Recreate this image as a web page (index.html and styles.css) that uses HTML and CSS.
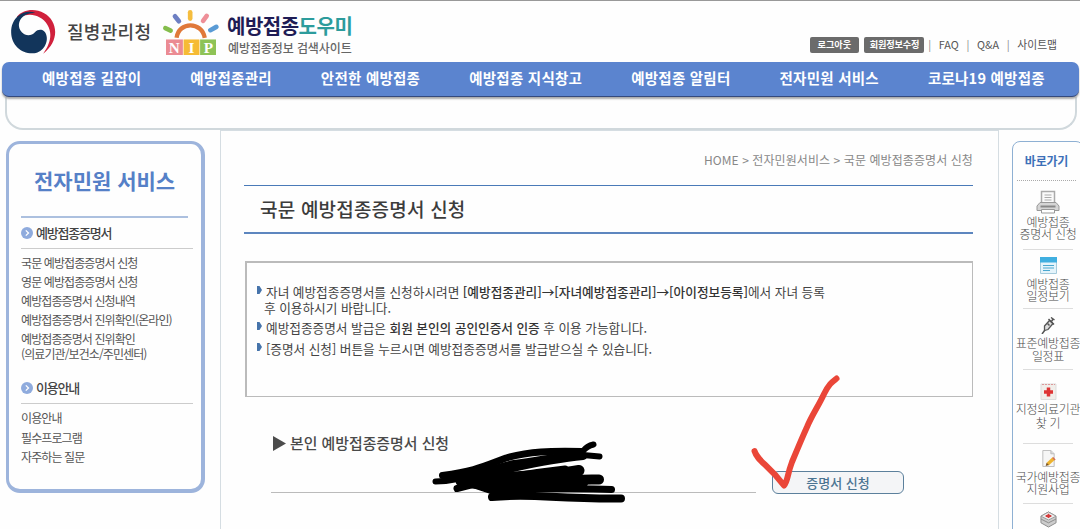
FILE: index.html
```html
<!DOCTYPE html>
<html lang="ko">
<head>
    <meta charset="UTF-8">
    <meta name="viewport" content="width=device-width, initial-scale=1.0">
    <title>예방접종도우미</title>
    <link rel="stylesheet" href="styles.css">
</head>
<body>
<div class="page">
    <header class="header">
        <div class="logos">
            <svg class="gov-mark" viewBox="30 28 140 138">
                <path fill="#d0203c" d="M50 51C68 30 103 24 132 41C173 64 180 124 129 162C150 134 158 102 142 76C124 46 84 36 58 56Z"/>
                <path fill="#12355b" d="M55 48C40 60 32 78 33 99C34 135 62 162 98 161C124 160 145 134 139 108C135 88 115 86 105 97C94 110 76 110 65 98C51 82 55 62 68 51C78 43 92 39 106 40C88 33 70 36 55 48Z"/>
            </svg>
            <span class="gov-name">질병관리청</span>
            <svg class="nip-mark" viewBox="487 26 172 142">
                <g fill="none" stroke-linecap="round" stroke-width="14">
                    <path stroke="#84bd4c" d="M497 84L513 91"/>
                    <path stroke="#6d7fc3" d="M526 48L538 63"/>
                    <path stroke="#f5bd3e" d="M572 36V55"/>
                    <path stroke="#ee8f98" d="M622 47L611 62"/>
                    <path stroke="#5a9bd5" d="M651 80L633 90"/>
                </g>
                <path fill="none" stroke="#e0793a" stroke-width="13" d="M531 113C537 63 608 63 616 113"/>
                <path fill="#eb8b93" d="M499 118H550V165H499Z"/>
                <path fill="#f6bb35" d="M552 118H600V165H552Z"/>
                <path fill="#8fc356" d="M602 118H650V165H602Z"/>
                <g class="nip-letters">
                    <text x="524" y="158">N</text>
                    <text x="576" y="158">I</text>
                    <text x="627" y="158">P</text>
                </g>
            </svg>
            <div class="site-name">
                <strong>예방접종<em>도우미</em></strong>
                <span>예방접종정보 검색사이트</span>
            </div>
        </div>
        <div class="util">
            <a class="util-btn logout">로그아웃</a>
            <a class="util-btn member">회원정보수정</a>
            <i>|</i><a>FAQ</a><i>|</i><a>Q&amp;A</a><i>|</i><a>사이트맵</a>
        </div>
    </header>

    <nav class="gnb">
        <a>예방접종 길잡이</a>
        <a>예방접종관리</a>
        <a>안전한 예방접종</a>
        <a>예방접종 지식창고</a>
        <a>예방접종 알림터</a>
        <a>전자민원 서비스</a>
        <a>코로나19 예방접종</a>
    </nav>
    <div class="gnb-sub"></div>

    <div class="body">
        <aside class="side">
            <h2>전자민원 서비스</h2>
            <h3>
                <svg viewBox="0 0 12 12"><circle cx="6" cy="6" r="6" fill="#8fabdd"/><path d="M4.8 3.4L7.5 6L4.8 8.6" fill="none" stroke="#fff" stroke-width="1.3"/></svg>
                예방접종증명서
            </h3>
            <ul>
                <li>국문 예방접종증명서 신청</li>
                <li>영문 예방접종증명서 신청</li>
                <li>예방접종증명서 신청내역</li>
                <li>예방접종증명서 진위확인(온라인)</li>
                <li class="two-line">예방접종증명서 진위확인<br>(의료기관/보건소/주민센터)</li>
            </ul>
            <h3>
                <svg viewBox="0 0 12 12"><circle cx="6" cy="6" r="6" fill="#8fabdd"/><path d="M4.8 3.4L7.5 6L4.8 8.6" fill="none" stroke="#fff" stroke-width="1.3"/></svg>
                이용안내
            </h3>
            <ul>
                <li>이용안내</li>
                <li>필수프로그램</li>
                <li>자주하는 질문</li>
            </ul>
        </aside>

        <main class="content">
            <p class="path">HOME &gt; 전자민원서비스 &gt; 국문 예방접종증명서 신청</p>
            <h1>국문 예방접종증명서 신청</h1>
            <ul class="notice">
                <li>자녀 예방접종증명서를 신청하시려면 <b>[예방접종관리]→[자녀예방접종관리]→[아이정보등록]</b>에서 자녀 등록<br><span>후 이용하시기 바랍니다.</span></li>
                <li>예방접종증명서 발급은 <b>회원 본인의 공인인증서 인증</b> 후 이용 가능합니다.</li>
                <li>[증명서 신청] 버튼을 누르시면 예방접종증명서를 발급받으실 수 있습니다.</li>
            </ul>
            <h4><svg viewBox="0 0 13 15"><path d="M0 0L13 7.5L0 15Z" fill="#4c4c4c"/></svg>본인 예방접종증명서 신청</h4>
            <div class="apply">
                <div class="apply-name"></div>
                <button class="apply-btn">증명서 신청</button>
            </div>
        </main>

        <aside class="quick">
            <h2>바로가기</h2>
            <div class="quick-item print">
                <svg viewBox="0 0 24 24">
                    <path d="M5.500 12V1.500H18.500V12" fill="#fafafa" stroke="#aaa" stroke-width="1.500"/>
                    <path d="M8.500 5H15.500M8.500 7.500H15.500M8.500 10H15.500" stroke="#aaa"/>
                    <path d="M4 12.500H20L23 16V20.500H1V16Z" fill="#d5d5d5" stroke="#999"/>
                    <path d="M4.500 16.500H19.500" stroke="#888" stroke-width="2"/>
                    <path d="M5.500 19.500H18.500V23H5.500Z" fill="#fff" stroke="#999"/>
                </svg>
                <span>예방접종<br>증명서 신청</span>
            </div>
            <div class="quick-item schedule">
                <svg viewBox="0 0 17 17">
                    <path d="M.5.5H16.500V16.500H.5Z" fill="#e4f4fb" stroke="#a5cbdc"/>
                    <path d="M0 0H17V5.500H0Z" fill="#40afe0"/>
                    <path d="M3 8.500H14M3 11H14M3 13.500H10" stroke="#4ba8d0"/>
                </svg>
                <span>예방접종<br>일정보기</span>
            </div>
            <div class="quick-item standard">
                <svg viewBox="0 0 17 17">
                    <path d="M4.500 9L9.500 3.500L13 6.500L8 12.500L4.500 13.500Z" fill="#ddd" stroke="#555" stroke-width="1.300"/>
                    <path d="M2 17L5 13M8.500 2L14 7.500M11.500 4.500L13 2M11 .5L14.500 3M7.500 6.500L9.500 8.500" fill="none" stroke="#555" stroke-width="1.500"/>
                </svg>
                <span>표준예방접종<br>일정표</span>
            </div>
            <div class="quick-item clinic">
                <svg viewBox="0 0 17 17">
                    <path d="M1 1H16V16.500H1Z" fill="#f1eeea" stroke="#ddd"/>
                    <path d="M2 1.500H15" stroke="#d99" stroke-width="1" stroke-dasharray="2 1"/>
                    <path d="M8.500 4.500V13.500M4 9H13" stroke="#de3434" stroke-width="3.500"/>
                </svg>
                <span>지정의료기관<br>찾 기</span>
            </div>
            <div class="quick-item support">
                <svg viewBox="0 0 17 18">
                    <path d="M2.500.5H11L14.500 4V17.500H2.500Z" fill="#f6f6f6" stroke="#bbb"/>
                    <path d="M11 .5V4H14.500" fill="#ddd" stroke="#bbb"/>
                    <path d="M7.500 15L14 9" stroke="#edb32f" stroke-width="3.500"/>
                    <path d="M5.500 17L6.500 13.500L9 16Z" fill="#7a5220"/>
                    <path d="M13 8L15.500 10.500" stroke="#d66b55" stroke-width="1.500"/>
                </svg>
                <span>국가예방접종<br>지원사업</span>
            </div>
            <div class="quick-item kit">
                <svg viewBox="0 0 18 17">
                    <path d="M1 5L9 .5L17 5V12L9 16.500L1 12Z" fill="#ccc" stroke="#888"/>
                    <path d="M1 5L9 .5L17 5L9 9Z" fill="#eee" stroke="#999"/>
                    <path d="M1 8L9 12L17 8" fill="none" stroke="#888"/>
                    <path d="M9 2.500V7M6 4.800H12" stroke="#d43c3c" stroke-width="2"/>
                </svg>
            </div>
        </aside>
    </div>

    <!-- pen marks drawn over the page -->
    <svg class="pen" viewBox="0 0 1080 529">
        <g fill="none" stroke="#000" stroke-linecap="round" stroke-linejoin="round">
            <path stroke-width="6" d="M593.500 444.500Q587 446 583 451"/>
            <path stroke-width="7" d="M442.500 475.500C475 471 482 467 506 458C530 451 550 451 582 451.500"/>
            <path stroke-width="6" d="M435.500 481.500C468 481 478 471 514 463C546 459 569 453 583 455L599.500 456.500"/>
            <path stroke-width="8" d="M447 477C492 477 522 462 583 456"/>
            <path stroke-width="11" d="M461 481C500 476 538 478 579 470.500"/>
            <path stroke-width="7" d="M457 488.500C485 481 519 474 565 469"/>
            <path stroke-width="10" d="M470 483C505 489 553 478 599 479.500"/>
            <path stroke-width="7" d="M478 484C520 492 561 487 611.500 489.500"/>
            <path stroke-width="8" d="M467 482L494 491C520 492 543 484 584 483"/>
            <path stroke-width="8" d="M492 497C534 493 550 499 621 498.500"/>
        </g>
        <path fill="none" stroke="#ea4638" stroke-width="6" stroke-linecap="round" stroke-linejoin="round" d="M754.500 451C758 462 768 464 784 485.500C788 481 787 475 792 462C797 450 802 438 807 427C812 415 819 405 824 394C829 384 832 382 836.500 378.500"/>
    </svg>
</div>
</body>
</html>
```
FILE: styles.css
```css
* {
    box-sizing: border-box;
}
body {
    margin: 0;
    background: #fefefe;
    color: #4a4a4a;
    font-family: "Noto Sans CJK KR", sans-serif;
    font-size: 12px;
}
h1, h2, h3, h4, p, ul {
    margin: 0;
    padding: 0;
    list-style: none;
}
svg {
    display: block;
    flex: none;
}
.page {
    position: relative;
    height: 529px;
    overflow: hidden;
    border-top: 1px solid #999;
    white-space: nowrap;
}

/* header */
.header {
    display: flex;
    justify-content: space-between;
    height: 61px;
    padding: 8px 23px 0 10px;
}
.logos {
    display: flex;
    align-items: flex-start;
}
.gov-mark {
    width: 47px;
    height: 46px;
}
.gov-name {
    width: 96px;
    padding: 8px 0 0 10px;
    font-size: 18px;
    font-weight: 500;
    line-height: 28px;
    letter-spacing: 0.3px;
    color: #444;
}
.nip-mark {
    width: 57px;
    height: 47px;
    margin-left: 9px;
}
.nip-letters {
    fill: #fff;
    font-family: "Liberation Serif", serif;
    font-size: 46px;
    font-weight: bold;
    text-anchor: middle;
}
.site-name {
    padding: 4px 0 0 8px;
}
.site-name strong, .site-name span {
    display: block;
}
.site-name strong {
    font-size: 20px;
    line-height: 25px;
    letter-spacing: -0.5px;
    color: #1f1c55;
}
.site-name em {
    font-style: normal;
    color: #2c9c9c;
}
.site-name span {
    padding-left: 1px;
    font-weight: 500;
    line-height: 19px;
    letter-spacing: -0.1px;
    color: #666;
}
.util {
    display: flex;
    gap: 7.7px;
    padding-top: 28px;
    font-size: 10.8px;
    line-height: 15px;
    color: #555;
}
.util i {
    font-style: normal;
    color: #888;
}
.util-btn {
    height: 16px;
    border-radius: 2px;
    background: #6b6b6b;
    color: #fff;
    font-size: 9.2px;
    font-weight: 700;
    line-height: 15px;
    text-align: center;
}
.logout {
    width: 49px;
    letter-spacing: -0.1px;
}
.member {
    width: 60px;
    margin: 0 -4px 0 -2px;
    letter-spacing: -0.2px;
}

/* main menu */
.gnb {
    position: relative;
    display: flex;
    gap: 49px;
    height: 35px;
    margin: 0 1px 0 2px;
    padding-left: 40px;
    border-bottom: 1px solid #34497c;
    border-radius: 7px;
    background: #5b84cf;
    box-shadow: 0 2px 2px #aaa;
    color: #fff;
    font-size: 14.5px;
    font-weight: 700;
    line-height: 31px;
    letter-spacing: 0.24px;
}
.gnb-sub {
    height: 33px;
    margin: 0 3px 0 5px;
    border: 2px solid #d0d8dc;
    border-top: 0;
    border-radius: 0 0 18px 18px;
}

/* columns */
.body {
    display: flex;
    align-items: flex-start;
}
.side {
    flex: none;
    width: 199px;
    height: 352px;
    margin: 11px 15px 0 6px;
    padding: 0 8px 0 12px;
    border: 4px solid #9db4dc;
    border-width: 3px 4px 4px 3px;
    border-radius: 14px;
}
.side h2 {
    height: 74px;
    margin-right: 5px;
    padding-left: 13px;
    border-bottom: 2px solid #acc0df;
    color: #5580c7;
    font-size: 21px;
    font-weight: 700;
    line-height: 73px;
}
.side h3 {
    display: flex;
    align-items: center;
    gap: 3px;
    height: 31px;
    border-bottom: 1px solid #ccc;
    color: #444;
    font-size: 13px;
    font-weight: 500;
    line-height: 28px;
    letter-spacing: -1.2px;
}
.side h3 svg {
    width: 12px;
    height: 12px;
}
.side ul {
    padding: 5px 0 5px;
}
.side li {
    height: 19px;
    line-height: 18px;
    letter-spacing: -0.9px;
    color: #555;
}
.side .two-line {
    height: 38px;
    padding-top: 1px;
    line-height: 15px;
}
.side ul:last-child li {
    height: 19.5px;
}
.content {
    flex: none;
    width: 779px;
    height: 420px;
    padding: 0 25px 0 23px;
    border: 1px solid #d5dde2;
}
.path {
    height: 54px;
    padding-top: 19px;
    line-height: 20px;
    letter-spacing: 0.08px;
    color: #888;
    text-align: right;
}
.content h1 {
    height: 49px;
    padding-left: 16px;
    border-top: 1px solid #4a7ab8;
    border-bottom: 2px solid #5d86bf;
    color: #3c3c3c;
    font-size: 19px;
    font-weight: 500;
    line-height: 46px;
    letter-spacing: 0.2px;
}
.notice {
    height: 136px;
    margin: 27px 0 0 1px;
    padding: 21px 0 0 10px;
    border: 2px solid #bbb;
    border-width: 2px 1px 1px 2px;
    color: #444;
    font-size: 12.7px;
    letter-spacing: -0.03px;
}
.notice li {
    display: block;
    margin-bottom: 5px;
    padding-left: 9px;
    line-height: 16px;
}
.notice li::before {
    content: "";
    float: left;
    width: 5px;
    height: 8px;
    margin: 2px 0 0 -9px;
    background: #4674ab;
    clip-path: polygon(0 0, 50% 0, 100% 50%, 50% 100%, 0 100%);
}
.notice li:first-child {
    line-height: 15.5px;
}
.notice span {
    margin-left: -2px;
}
.notice b {
    font-weight: 500;
    color: #333;
}
.content h4 {
    display: flex;
    align-items: center;
    gap: 4px;
    margin: 34px 0 0 29px;
    font-size: 14.9px;
    font-weight: 500;
    line-height: 24px;
}
.content h4 svg {
    width: 13px;
    height: 15px;
}
.apply {
    display: flex;
    gap: 16px;
    height: 23px;
    margin: 16px 0 0 27px;
}
.apply-name {
    width: 485px;
    height: 22px;
    border-bottom: 1px solid #bbb;
}
.apply-btn {
    width: 132px;
    padding: 0;
    border: 1px solid #5c809c;
    border-radius: 6px;
    background: #f4f5f7;
    color: #4b7492;
    font-family: inherit;
    font-size: 13px;
    font-weight: 500;
    line-height: 20px;
}

/* quick menu */
.quick {
    flex: none;
    width: 72px;
    height: 420px;
    margin: 11px 0 0 13px;
    border: 1px solid #8eb0d3;
    border-radius: 8px;
}
.quick h2 {
    height: 39px;
    margin: 0 7px 0 4px;
    border-bottom: 1px dotted #aaa;
    color: #3d70b8;
    font-size: 12px;
    font-weight: 700;
    line-height: 38px;
    letter-spacing: -0.2px;
    text-align: center;
}
.quick-item {
    display: flex;
    flex-direction: column;
    align-items: center;
    gap: 2px;
    margin: 0 -6px;
    background: linear-gradient(#ddd, #ddd) no-repeat 50% 100% / 50px 1px;
    font-weight: 300;
    line-height: 12px;
    letter-spacing: -0.3px;
    text-align: center;
}
.quick-item svg {
    width: 17px;
    height: 17px;
}
.quick .print {
    height: 69px;
    padding-top: 9px;
}
.print svg {
    width: 24px;
    height: 24px;
}
.quick .schedule {
    gap: 4px;
    height: 59px;
    padding-top: 7px;
}
.quick .standard {
    height: 61px;
    padding-top: 8px;
    line-height: 13px;
}
.quick .clinic {
    height: 74px;
    padding-top: 13px;
    line-height: 14px;
}
.quick .support {
    gap: 4px;
    height: 60px;
    padding-top: 6px;
}
.quick .kit {
    padding-top: 7px;
    background: none;
}

.pen {
    position: absolute;
    top: -1px;
    left: 0;
    width: 1080px;
    height: 529px;
    pointer-events: none;
}
```
